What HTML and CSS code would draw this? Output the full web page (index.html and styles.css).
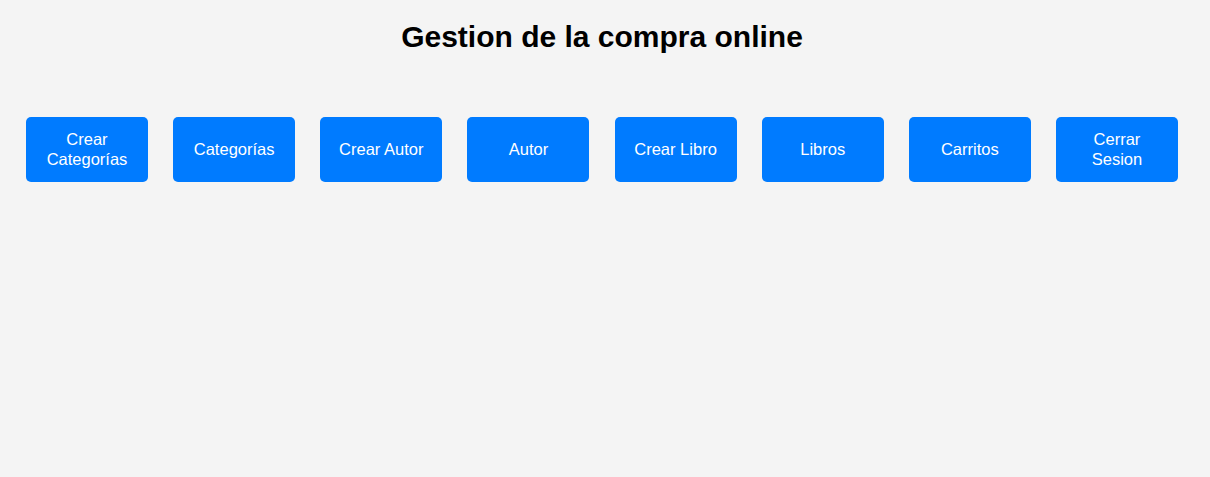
FILE: index.html
```html
<!DOCTYPE html>
<html lang="es">
<head>
<meta charset="utf-8">
<title>Gestion de la compra online</title>
<link rel="stylesheet" href="styles.css">
</head>
<body>
<main class="page">
  <h1 class="title">Gestion de la compra online</h1>
  <nav class="menu">
    <button class="btn">Crear Categorías</button>
    <button class="btn">Categorías</button>
    <button class="btn">Crear Autor</button>
    <button class="btn">Autor</button>
    <button class="btn">Crear Libro</button>
    <button class="btn">Libros</button>
    <button class="btn">Carritos</button>
    <button class="btn">Cerrar Sesion</button>
  </nav>
</main>
</body>
</html>
```

FILE: styles.css
```css
html, body {
  margin: 0;
  padding: 0;
  background: #f4f4f4;
  height: 100%;
}
body {
  font-family: "Liberation Sans", Arial, sans-serif;
  color: #000;
}
.page {
  padding: 20px 32px 0 26px;
}
.title {
  margin: 0;
  font-size: 30px;
  font-weight: bold;
  line-height: 34px;
  text-align: center;
}
.menu {
  display: flex;
  justify-content: space-between;
  margin-top: 63px;
}
.btn {
  width: 122px;
  height: 65px;
  padding: 0 15px 2px;
  border: none;
  border-radius: 5px;
  background: #007bff;
  color: #fff;
  font-family: "Liberation Sans", Arial, sans-serif;
  font-size: 16.5px;
  line-height: 20px;
  text-align: center;
  cursor: pointer;
}
```
